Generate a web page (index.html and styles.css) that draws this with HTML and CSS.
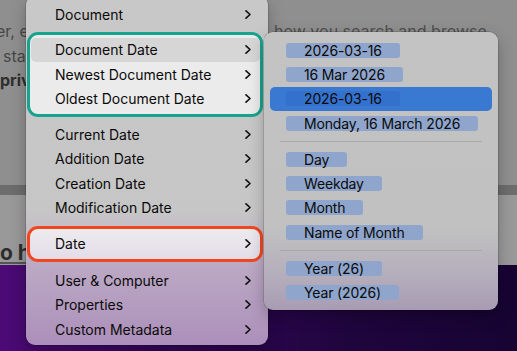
FILE: index.html
```html
<!DOCTYPE html>
<html lang="en">
<head>
    <meta charset="UTF-8" />
    <title>Placeholder menu</title>
    <link rel="stylesheet" href="styles.css">
</head>
<body>
    <div class="screen">
        <div class="window">
            <div class="doc">
                <div class="line first"><span class="l">er, e</span><span class="r">how you search and browse</span></div>
                <div class="line second"><span class="l">sta</span><span class="r"></span></div>
                <div class="line bold"><span class="l">priv</span><span class="r"></span></div>
            </div>
            <div class="band"></div>
            <div class="lower"><span class="heading">o h</span></div>
        </div>
        <div class="desktop"></div>

        <!-- main context menu -->
        <div class="menu main">
            <div class="item"><span>Document</span><svg class="chev" viewBox="0 0 6 9"><polyline points="1,0.8 5,4.5 1,8.2"/></svg></div>
            <div class="group green">
                <div class="item hl"><span>Document Date</span><svg class="chev" viewBox="0 0 6 9"><polyline points="1,0.8 5,4.5 1,8.2"/></svg></div>
                <div class="item"><span>Newest Document Date</span><svg class="chev" viewBox="0 0 6 9"><polyline points="1,0.8 5,4.5 1,8.2"/></svg></div>
                <div class="item"><span>Oldest Document Date</span><svg class="chev" viewBox="0 0 6 9"><polyline points="1,0.8 5,4.5 1,8.2"/></svg></div>
            </div>
            <div class="item"><span>Current Date</span><svg class="chev" viewBox="0 0 6 9"><polyline points="1,0.8 5,4.5 1,8.2"/></svg></div>
            <div class="item"><span>Addition Date</span><svg class="chev" viewBox="0 0 6 9"><polyline points="1,0.8 5,4.5 1,8.2"/></svg></div>
            <div class="item"><span>Creation Date</span><svg class="chev" viewBox="0 0 6 9"><polyline points="1,0.8 5,4.5 1,8.2"/></svg></div>
            <div class="item"><span>Modification Date</span><svg class="chev" viewBox="0 0 6 9"><polyline points="1,0.8 5,4.5 1,8.2"/></svg></div>
            <div class="group red">
                <div class="item"><span>Date</span><svg class="chev" viewBox="0 0 6 9"><polyline points="1,0.8 5,4.5 1,8.2"/></svg></div>
            </div>
            <div class="item"><span>User &amp; Computer</span><svg class="chev" viewBox="0 0 6 9"><polyline points="1,0.8 5,4.5 1,8.2"/></svg></div>
            <div class="item"><span>Properties</span><svg class="chev" viewBox="0 0 6 9"><polyline points="1,0.8 5,4.5 1,8.2"/></svg></div>
            <div class="item"><span>Custom Metadata</span><svg class="chev" viewBox="0 0 6 9"><polyline points="1,0.8 5,4.5 1,8.2"/></svg></div>
        </div>

        <!-- date submenu -->
        <div class="menu sub">
            <div class="row"><span class="token">2026-03-16</span></div>
            <div class="row"><span class="token">16 Mar 2026</span></div>
            <div class="row active"><span class="token">2026-03-16</span></div>
            <div class="row"><span class="token">Monday, 16 March 2026</span></div>
            <div class="sep"></div>
            <div class="row"><span class="token">Day</span></div>
            <div class="row"><span class="token">Weekday</span></div>
            <div class="row"><span class="token">Month</span></div>
            <div class="row"><span class="token">Name of Month</span></div>
            <div class="sep"></div>
            <div class="row"><span class="token">Year (26)</span></div>
            <div class="row"><span class="token">Year (2026)</span></div>
        </div>
    </div>
</body>
</html>
```
FILE: styles.css
```css
body {
    margin: 0;
    font-family: Inter, "Noto Sans", sans-serif;
    color: #0a0a0a;
}

.screen {
    position: relative;
    width: 517px;
    height: 351px;
    overflow: hidden;
    display: flex;
    flex-direction: column;
}

/* dimmed window behind the menus */
.window {
    height: 265px;
    display: flex;
    flex-direction: column;
    background-color: #8f8f8f;
}

.doc {
    height: 185px;
    padding-top: 19px;
    box-sizing: border-box;
    font-size: 16px;
    color: #474747;
}

.line {
    display: flex;
    height: 24.5px;
    line-height: 24.5px;
    white-space: nowrap;
}

.line .l {
    width: 274px;
}

.line.first .l {
    margin-left: -4px;
    width: 278px;
}

.line.second .l {
    margin-left: 3px;
}

.line .r {
    color: #4f4f4f;
}

.bold {
    font-weight: 700;
    color: #2e2e2e;
}

.band {
    height: 10px;
    background-color: #6d6d6d;
}

.lower {
    flex: 1;
    background-color: #999;
    display: flex;
    align-items: flex-end;
}

.heading {
    font-size: 21px;
    font-weight: 700;
    color: #2e2e2e;
    line-height: 22px;
    padding-bottom: 1px;
    text-decoration: underline;
    text-decoration-color: #555;
}

.desktop {
    flex: 1;
    background: linear-gradient(90deg, #4c0a76 0%, #33075a 30%, #1e053c 70%, #170433 100%);
}

/* menus */
.menu {
    position: absolute;
    box-sizing: border-box;
    border-radius: 9px;
    font-size: 14px;
    box-shadow: 0 0 0 0.5px rgba(0,0,0,0.25), 0 6px 16px rgba(0,0,0,0.25);
}

.main {
    left: 26px;
    top: -4px;
    width: 242px;
    height: 349px;
    padding: 6px 0 3.5px;
    background: linear-gradient(180deg, #c8c8c8 0%, #c6c6c6 62%, #bba8c4 78%, #ac8fba 100%);
}

.item {
    height: 24.5px;
    display: flex;
    align-items: center;
    justify-content: space-between;
    padding: 0 17px 0 29px;
}

.chev {
    width: 6px;
    height: 9px;
    fill: none;
    stroke: #111;
    stroke-width: 1.6;
    stroke-linecap: round;
    stroke-linejoin: round;
}

.group {
    border: 3px solid;
    border-radius: 11px;
    padding: 2.5px 0;
}

.group .item {
    padding: 0 9px 0 25px;
}

.green {
    margin: 5.5px 5px 5.5px 1px;
    border-color: #17a48e;
    background-color: #ebebeb;
}

.red {
    margin: 6px 5px 6.5px 1px;
    border-color: #f2461f;
    background: linear-gradient(180deg, #ecebee, #e4dce9);
}

.green .hl {
    background-color: #d6d6d6;
    border-radius: 5px;
    margin-left: 1px;
    padding-left: 24px;
}

.sub {
    left: 264px;
    top: 32px;
    width: 234px;
    height: 278px;
    padding: 6px 0 5px;
    background: linear-gradient(180deg, #c3c3c3 0%, #c1c1c1 70%, #b4adbb 88%, #a89cb3 100%);
}

.row {
    height: 24.3px;
    display: flex;
    align-items: center;
    padding-left: 22px;
}

.token {
    height: 15px;
    line-height: 15px;
    padding: 0 18px;
    border-radius: 3px;
    background-color: #8fa5cb;
    color: #0a0a0a;
    white-space: nowrap;
    letter-spacing: -0.15px;
}

.row.active {
    margin: 0 6px;
    padding-left: 16px;
    background-color: #3a79d2;
    border-radius: 5px;
}

.row.active .token {
    background-color: #3471cc;
}

.sub .sep {
    height: 12px;
    margin: 0 16px;
    display: flex;
    align-items: center;
}

.sub .sep::before {
    content: "";
    flex: 1;
    height: 1px;
    background-color: #a9a9a9;
}
```
